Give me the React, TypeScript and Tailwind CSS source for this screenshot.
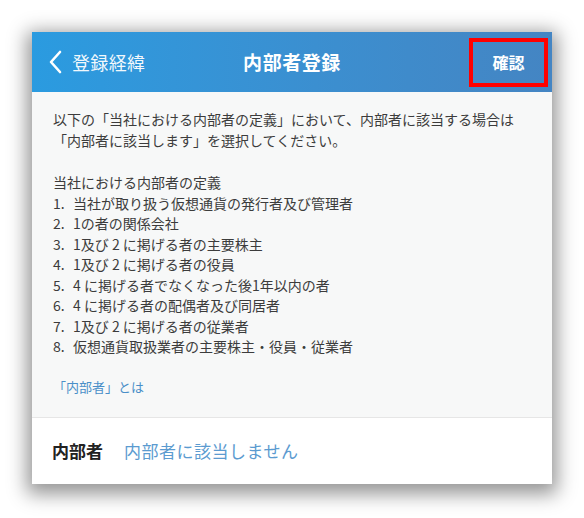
const definitions = [
  "当社が取り扱う仮想通貨の発行者及び管理者",
  "1の者の関係会社",
  "1及び 2 に掲げる者の主要株主",
  "1及び 2 に掲げる者の役員",
  "4 に掲げる者でなくなった後1年以内の者",
  "4 に掲げる者の配偶者及び同居者",
  "1及び 2 に掲げる者の従業者",
  "仮想通貨取扱業者の主要株主・役員・従業者",
];

export default function App() {
  return (
    <div className="h-[518px] w-[584px] bg-white p-8 font-['Noto_Sans_CJK_JP','Noto_Sans',sans-serif]">
      <div className="flex h-[452px] w-[520px] flex-col overflow-hidden shadow-[0_5px_18px_5px_rgba(0,0,0,0.42)]">
        {/* ヘッダー */}
        <header className="grid h-[60px] shrink-0 grid-cols-[1fr_auto_1fr] items-center bg-gradient-to-r from-[#2a9be0] to-[#4485c3] text-white">
          <div className="flex items-center gap-[10px] pl-[17px]">
            <svg width="13" height="24" viewBox="0 0 13 24" fill="none" aria-hidden>
              <path
                d="M11 2 L2 12 L11 22"
                stroke="white"
                strokeWidth="2.6"
                strokeLinecap="round"
                strokeLinejoin="round"
              />
            </svg>
            <span className="text-[18px] tracking-[0.02em] text-white/95">登録経緯</span>
          </div>
          <h1 className="text-[19px] font-bold tracking-[0.03em]">内部者登録</h1>
          <div className="flex justify-end pr-[4px]">
            <button
              type="button"
              className="flex h-[49px] w-[79px] items-center justify-center border-[4px] border-[#ff0000] text-[16px] font-bold"
            >
              確認
            </button>
          </div>
        </header>

        {/* 説明 */}
        <div className="flex-1 bg-[#f7f8f8] px-[21px] pt-[17px] text-[14px] leading-[20.5px] text-[#3c3c3c]">
          <p>
            以下の「当社における内部者の定義」において、内部者に該当する場合は
            <br />
            「内部者に該当します」を選択してください。
          </p>
          <p className="mt-[22px]">当社における内部者の定義</p>
          <ol>
            {definitions.map((d, i) => (
              <li key={d} className="flex">
                <span className="w-[20px] shrink-0">{i + 1}.</span>
                <span>{d}</span>
              </li>
            ))}
          </ol>
          <p className="mt-[20px] text-[13px] text-[#4a8fc8]">「内部者」とは</p>
        </div>

        {/* 選択 */}
        <div className="flex h-[67px] shrink-0 items-center gap-[21px] border-t border-[#e6e6e6] bg-white px-[20px]">
          <span className="text-[17px] font-bold text-[#222]">内部者</span>
          <span className="text-[17px] tracking-[0.03em] text-[#5b9bd0]">内部者に該当しません</span>
        </div>
      </div>
    </div>
  );
}
